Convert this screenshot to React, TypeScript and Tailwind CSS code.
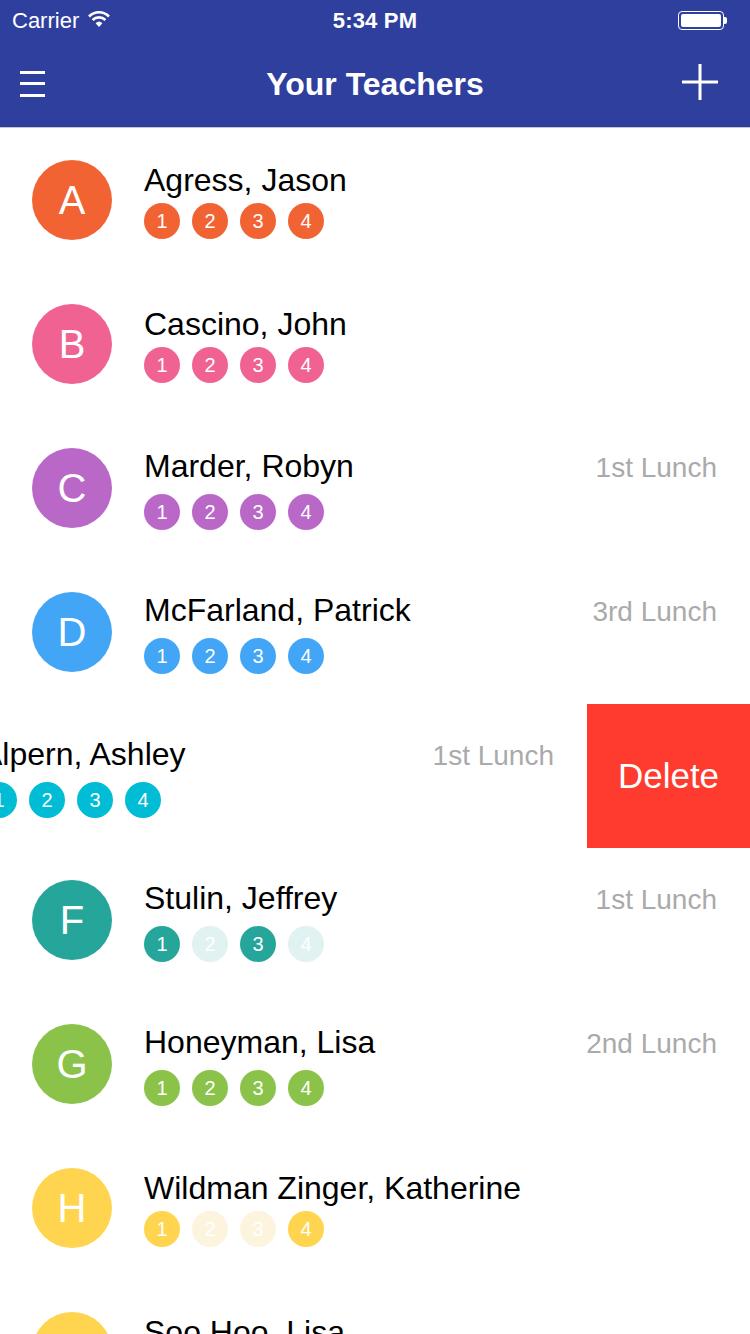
import React from 'react';

type Teacher = {
  letter: string;
  name: string;
  color: string;
  faded: string;
  periods: boolean[];
  lunch?: string;
  swiped?: boolean;
};

const teachers: Teacher[] = [
  { letter: 'A', name: 'Agress, Jason', color: '#f26334', faded: '#fde3da', periods: [true, true, true, true] },
  { letter: 'B', name: 'Cascino, John', color: '#f06292', faded: '#fde4ee', periods: [true, true, true, true] },
  { letter: 'C', name: 'Marder, Robyn', color: '#ba68c8', faded: '#f3e5f5', periods: [true, true, true, true], lunch: '1st Lunch' },
  { letter: 'D', name: 'McFarland, Patrick', color: '#42a5f5', faded: '#e3f2fd', periods: [true, true, true, true], lunch: '3rd Lunch' },
  { letter: 'E', name: 'Alpern, Ashley', color: '#00bcd4', faded: '#e0f7fa', periods: [true, true, true, true], lunch: '1st Lunch', swiped: true },
  { letter: 'F', name: 'Stulin, Jeffrey', color: '#26a69a', faded: '#e0f2f1', periods: [true, false, true, false], lunch: '1st Lunch' },
  { letter: 'G', name: 'Honeyman, Lisa', color: '#8bc34a', faded: '#f1f8e9', periods: [true, true, true, true], lunch: '2nd Lunch' },
  { letter: 'H', name: 'Wildman Zinger, Katherine', color: '#ffd54f', faded: '#fcf4dc', periods: [true, false, false, true] },
  { letter: 'I', name: 'Soo Hoo, Lisa', color: '#ffd54f', faded: '#fcf4dc', periods: [true, true, true, true] },
];

const font = { fontFamily: '"Liberation Sans", Arial, sans-serif' };

function StatusBar() {
  return (
    <div className="relative h-[40px] flex items-center px-[12px] text-white text-[22px]">
      <span>Carrier</span>
      <svg className="ml-[9px] mt-[-2px]" width="22" height="18" viewBox="0 0 22 18">
        <path d="M1 6.5 A14 14 0 0 1 21 6.5" stroke="white" strokeWidth="2.6" fill="none" />
        <path d="M4.6 10 A9 9 0 0 1 17.4 10" stroke="white" strokeWidth="2.6" fill="none" />
        <path d="M11 17 L7.6 13.2 A5 5 0 0 1 14.4 13.2 Z" fill="white" />
      </svg>
      <span className="absolute left-0 right-0 text-center font-bold text-[22px] tracking-[0.2px]">5:34 PM</span>
      <div className="ml-auto mr-[11px] flex items-center">
        <div className="w-[46px] h-[19px] rounded-[4px] border border-white p-[2px]">
          <div className="w-full h-full bg-white rounded-[2px]" />
        </div>
        <div className="w-[3px] h-[7px] bg-white rounded-r-[2px]" />
      </div>
    </div>
  );
}

function NavBar() {
  return (
    <div className="relative h-[88px] flex items-center justify-between border-b border-[#c8c8cc]">
      <div className="ml-[20px] flex flex-col gap-[8.5px]">
        <div className="w-[25px] h-[3px] bg-white" />
        <div className="w-[25px] h-[3px] bg-white" />
        <div className="w-[25px] h-[3px] bg-white" />
      </div>
      <span className="absolute left-0 right-0 text-center text-white text-[32px] font-bold">
        Your Teachers
      </span>
      <svg className="mr-[32px] mt-[-4px]" width="36" height="36" viewBox="0 0 36 36">
        <path d="M18 0 V36 M0 18 H36" stroke="white" strokeWidth="3" />
      </svg>
    </div>
  );
}

function TeacherRow({ t }: { t: Teacher }) {
  const content = (
    <div className="w-[750px] h-[144px] shrink-0 flex items-center">
      <div
        className="ml-[32px] w-[80px] h-[80px] rounded-full flex items-center justify-center text-white text-[40px] shrink-0"
        style={{ backgroundColor: t.color }}
      >
        {t.letter}
      </div>
      <div className="ml-[32px] flex-1 flex flex-col">
        <div className="flex items-baseline justify-between pr-[33px]">
          <span className="text-[32px] leading-[36px] text-black whitespace-nowrap">{t.name}</span>
          {t.lunch && <span className="text-[28px] text-[#aaaaaa] whitespace-nowrap">{t.lunch}</span>}
        </div>
        <div className="mt-[5px] flex gap-[12px]">
          {t.periods.map((on, i) => (
            <div
              key={i}
              className="w-[36px] h-[36px] rounded-full flex items-center justify-center text-white text-[20px]"
              style={{ backgroundColor: on ? t.color : t.faded }}
            >
              {i + 1}
            </div>
          ))}
        </div>
      </div>
    </div>
  );

  if (t.swiped) {
    return (
      <div className="h-[144px] flex overflow-hidden">
        <div className="-ml-[163px] flex">{content}</div>
        <div className="w-[163px] h-[144px] shrink-0 bg-[#ff3b30] flex items-center justify-center text-white text-[35px]">
          Delete
        </div>
      </div>
    );
  }
  return <div className="h-[144px] overflow-hidden">{content}</div>;
}

export default function App() {
  return (
    <div className="w-[750px] h-[1334px] overflow-hidden bg-white" style={font}>
      <div className="bg-[#2f3f9e]">
        <StatusBar />
        <NavBar />
      </div>
      <div className="flex flex-col">
        {teachers.map((t) => (
          <TeacherRow key={t.letter} t={t} />
        ))}
      </div>
    </div>
  );
}
